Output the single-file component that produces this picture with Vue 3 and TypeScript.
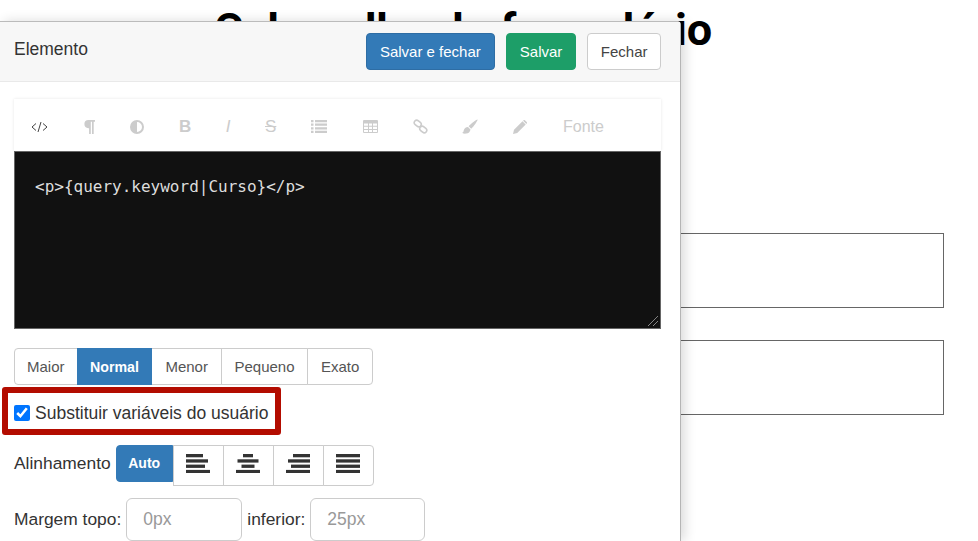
<script setup lang="ts">
const sizes = ['Maior', 'Normal', 'Menor', 'Pequeno', 'Exato']
const aligns = [
  [[0, 17], [0, 22], [0, 19], [0, 24]],
  [[7, 10], [1.500, 21], [5.500, 13], [0, 24]],
  [[7, 17], [2, 22], [5, 19], [0, 24]],
  [[0, 24], [0, 24], [0, 24], [0, 24]],
]
</script>

<template>
  <div class="page">
    <h1 class="title">Cabeçalho do formulário</h1>
    <div class="field first"></div>
    <div class="field"></div>

    <aside class="panel">
      <header class="head">
        <span class="head-title">Elemento</span>
        <div class="actions">
          <button class="btn blue">Salvar e fechar</button>
          <button class="btn green">Salvar</button>
          <button class="btn plain">Fechar</button>
        </div>
      </header>

      <div class="body">
        <div class="toolbar">
          <svg class="tool code" viewBox="0 0 17 12"><path d="M5 2.500 1 6l4 3.500M12 2.500 16 6l-4 3.500M10 1 7 11" fill="none" stroke="#444" stroke-width="1"/></svg>
          <svg class="tool para" viewBox="0 0 11 14"><path d="M4.500 0H11v1.800H9.700V14H8V1.800H6.800V14H5.100V8.200H4.500a4.100 4.100 0 0 1 0-8.200Z"/></svg>
          <svg class="tool contrast" viewBox="0 0 14 14"><path fill-rule="evenodd" d="M7 0a7 7 0 1 1 0 14A7 7 0 0 1 7 0Zm0 2v10a5 5 0 0 0 0-10Z"/></svg>
          <span class="tool letter bold">B</span>
          <span class="tool letter ital">I</span>
          <span class="tool letter strike">S</span>
          <svg class="tool list" viewBox="0 0 16 13"><path d="M0 0h2.500v2.200H0zM4 0h12v2.200H4zM0 3.600h2.500v2.200H0zM4 3.600h12v2.200H4zM0 7.200h2.500v2.200H0zM4 7.200h12v2.200H4zM0 10.800h2.500V13H0zM4 10.800h12V13H4z"/></svg>
          <svg class="tool table" viewBox="0 0 15 13"><path fill-rule="evenodd" d="M1 0h13a1 1 0 0 1 1 1v11a1 1 0 0 1-1 1H1a1 1 0 0 1-1-1V1a1 1 0 0 1 1-1Zm0 3.500v2.200h4V3.500Zm5 0v2.200h3V3.500Zm4 0v2.200h4V3.500ZM1 6.700V9h4V6.700Zm5 0V9h3V6.700Zm4 0V9h4V6.700ZM1 10v2h4v-2Zm5 0v2h3v-2Zm4 0v2h4v-2Z"/></svg>
          <svg class="tool link" viewBox="0 0 15 15"><g fill="none" stroke="#ccc" stroke-width="1.600"><rect x="1" y="2" width="7.500" height="5" rx="2.500" transform="rotate(40 4.750 4.500)"/><rect x="6.500" y="8" width="7.500" height="5" rx="2.500" transform="rotate(40 10.250 10.500)"/></g></svg>
          <svg class="tool brush" viewBox="0 0 16 16"><path d="M15.500.5c.6.500-3.700 7-6.300 9.200L6.600 7.300C9 4.500 15-.1 15.500.5ZM6 8l2.500 2.400c-.3 2.300-2.100 4-4.300 4.200-1.400.2-3.100 0-4.200-.8 1.400-.3 1.500-1.100 1.700-2.200C2 9.800 3.800 8 6 8Z"/></svg>
          <svg class="tool pencil" viewBox="0 0 14 14"><path d="M0 14l1-4.200L9.500 1.300l3.200 3.200L4.200 13ZM10.500.3a1 1 0 0 1 1.400 0l1.800 1.800a1 1 0 0 1 0 1.400l-.4.400-3.200-3.200Z"/></svg>
          <span class="tool fonte">Fonte</span>
        </div>

        <div class="editor">
          <code>&lt;p&gt;{query.keyword|Curso}&lt;/p&gt;</code>
          <svg class="grip" viewBox="0 0 10 10"><path d="M0 10 10 0M5 10l5-5" stroke="#bbb" stroke-width="1" stroke-dasharray="1 .4"/></svg>
        </div>

        <div class="sizes">
          <button v-for="s in sizes" :key="s" class="size" :class="{ active: s === 'Normal' }">{{ s }}</button>
        </div>

        <label class="check-box">
          <input type="checkbox" checked />
          <span>Substituir variáveis do usuário</span>
        </label>

        <div class="align-row">
          <span class="label">Alinhamento</span>
          <button class="auto">Auto</button>
          <div class="align-group">
            <button v-for="(a, i) in aligns" :key="i" class="align">
              <svg viewBox="0 0 24 19" width="24" height="19">
                <rect
                  v-for="(r, j) in a"
                  :key="j"
                  :x="r[0]"
                  :y="j * 5.300"
                  :width="r[1]"
                  height="3.300"
                  fill="#333"
                />
              </svg>
            </button>
          </div>
        </div>

        <div class="margin-row">
          <span class="label">Margem topo:</span>
          <input class="num top" placeholder="0px" />
          <span class="label">inferior:</span>
          <input class="num bottom" placeholder="25px" />
        </div>
      </div>
    </aside>
  </div>
</template>

<style>
html, body { margin: 0; overflow: hidden; background: #fff; }
</style>

<style scoped>
.page {
  position: relative;
  width: 978px;
  height: 541px;
  overflow: hidden;
  background: #fff;
  font-family: "Liberation Sans", Arial, sans-serif;
  color: #333;
}
.title {
  margin: 0;
  padding-top: 5px;
  padding-left: 214px;
  font-family: Roboto, "Liberation Sans", sans-serif;
  font-size: 45px;
  line-height: 50px;
  font-weight: 700;
  color: #000;
  white-space: nowrap;
}
.field {
  margin: 32px 34px 0 40px;
  height: 73px;
  border: 1px solid #666;
}
.field.first { margin-top: 178px; }
.panel {
  position: absolute;
  left: 0;
  top: 21px;
  bottom: 0;
  width: 680px;
  background: #fff;
  border-top: 1px solid #bbb;
  border-right: 1px solid #b5b5b5;
  border-top-right-radius: 4px;
  box-shadow: 4px 0 12px rgba(0, 0, 0, .14);
}
.head {
  box-sizing: border-box;
  height: 60px;
  padding: 0 19px 0 14px;
  display: flex;
  align-items: center;
  justify-content: space-between;
  background: #f7f7f7;
  border-bottom: 1px solid #e9e9e9;
}
.head-title { font-size: 17.500px; color: #333; position: relative; top: -2px; }
.actions { display: flex; gap: 11px; }
.btn {
  box-sizing: border-box;
  height: 37px;
  padding: 0 13px;
  border: 1px solid transparent;
  border-radius: 4px;
  font: 15px "Liberation Sans", Arial, sans-serif;
}
.blue { background: #337ab7; border-color: #2e6da4; color: #fff; }
.green { background: #1d9e68; border-color: #1d9e68; color: #fff; }
.plain { background: #fff; border-color: #ccc; color: #444; padding: 0 12.500px; }
.body { padding: 17px 19px 0 14px; }
.toolbar {
  box-sizing: border-box;
  height: 52px;
  padding: 3px 0 0 17px;
  display: flex;
  align-items: center;
  background: #fff;
  box-shadow: 0 0 3px rgba(0, 0, 0, .1);
  position: relative;
}
.tool { flex: none; fill: #ccc; color: #ccc; display: block; }
.code { width: 17px; height: 12px; }
.para { width: 11px; height: 14px; margin-left: 36px; }
.contrast { width: 14px; height: 14px; margin-left: 35px; }
.letter { font-size: 17px; line-height: 16px; text-align: center; }
.bold { font-weight: 700; margin-left: 35px; width: 12px; }
.ital { font-style: italic; margin-left: 34px; width: 6px; }
.strike { text-decoration: line-through; margin-left: 34px; width: 11px; }
.list { width: 16px; height: 13px; margin-left: 35px; }
.table { width: 15px; height: 13px; margin-left: 36px; }
.link { width: 15px; height: 15px; margin-left: 35px; }
.brush { width: 16px; height: 16px; margin-left: 34px; }
.pencil { width: 14px; height: 14px; margin-left: 35px; }
.fonte { font-size: 16px; margin-left: 36px; }
.editor {
  box-sizing: border-box;
  height: 178px;
  position: relative;
  padding: 25px 20px;
  background: #111;
  border: 1px solid #666;
}
.editor code {
  font-family: "DejaVu Sans Mono", monospace;
  font-size: 16px;
  line-height: 20px;
  color: #ddd;
}
.grip { position: absolute; right: 2px; bottom: 2px; width: 10px; height: 10px; }
.sizes { display: flex; margin-top: 19px; }
.size {
  box-sizing: border-box;
  height: 37px;
  padding: 0 13px;
  margin-left: -1px;
  background: #fff;
  border: 1px solid #ccc;
  color: #555;
  font: 15px "Liberation Sans", Arial, sans-serif;
}
.size:first-child { margin-left: 0; padding: 0 12px; border-radius: 4px 0 0 4px; }
.size:nth-child(4) { padding: 0 12.500px; }
.size:last-child { border-radius: 0 4px 4px 0; }
.size.active { background: #337ab7; border-color: #337ab7; color: #fff; font-weight: 700; font-size: 14.200px; padding: 0 12.500px; position: relative; }
.check-box {
  box-sizing: border-box;
  display: flex;
  align-items: center;
  width: 279px;
  height: 48px;
  margin: 2px 0 0 -12px;
  padding: 4px 0 0 12px;
  border: 6px solid #b30c00;
  border-radius: 3px;
  font-size: 17.500px;
  color: #333;
}
.check-box input { width: 16px; height: 16px; margin: 0 5px 0 -6px; accent-color: #0075ff; flex: none; }
.check-box span { white-space: nowrap; }
.align-row { display: flex; align-items: flex-start; margin-top: 10px; }
.label { font-size: 17.400px; color: #333; white-space: nowrap; }
.align-row .label { line-height: 37px; margin-right: 5px; }
.auto {
  box-sizing: border-box;
  width: 57px;
  height: 37px;
  padding: 0 0 2px;
  border: 1px solid #337ab7;
  background: #337ab7;
  color: #fff;
  font: 700 14px "Liberation Sans", Arial, sans-serif;
  border-radius: 4px 0 0 4px;
}
.align-group { display: flex; }
.align {
  box-sizing: border-box;
  width: 51px;
  height: 41px;
  margin-left: -1px;
  padding: 0 0 5px;
  border: 1px solid #ccc;
  background: #fff;
  display: flex;
  align-items: center;
  justify-content: center;
}
.align:first-child { margin-left: 0; }
.align:last-child { border-radius: 0 4px 4px 0; }
.margin-row { display: flex; align-items: center; margin-top: 12px; gap: 5px; }
.num {
  box-sizing: border-box;
  height: 43px;
  padding: 0 16px;
  border: 1px solid #ccc;
  border-radius: 6px;
  font: 17.500px "Liberation Sans", Arial, sans-serif;
}
.num::placeholder { color: #999; opacity: 1; }
.num.top { width: 116px; }
.num.bottom { width: 115px; }
</style>
